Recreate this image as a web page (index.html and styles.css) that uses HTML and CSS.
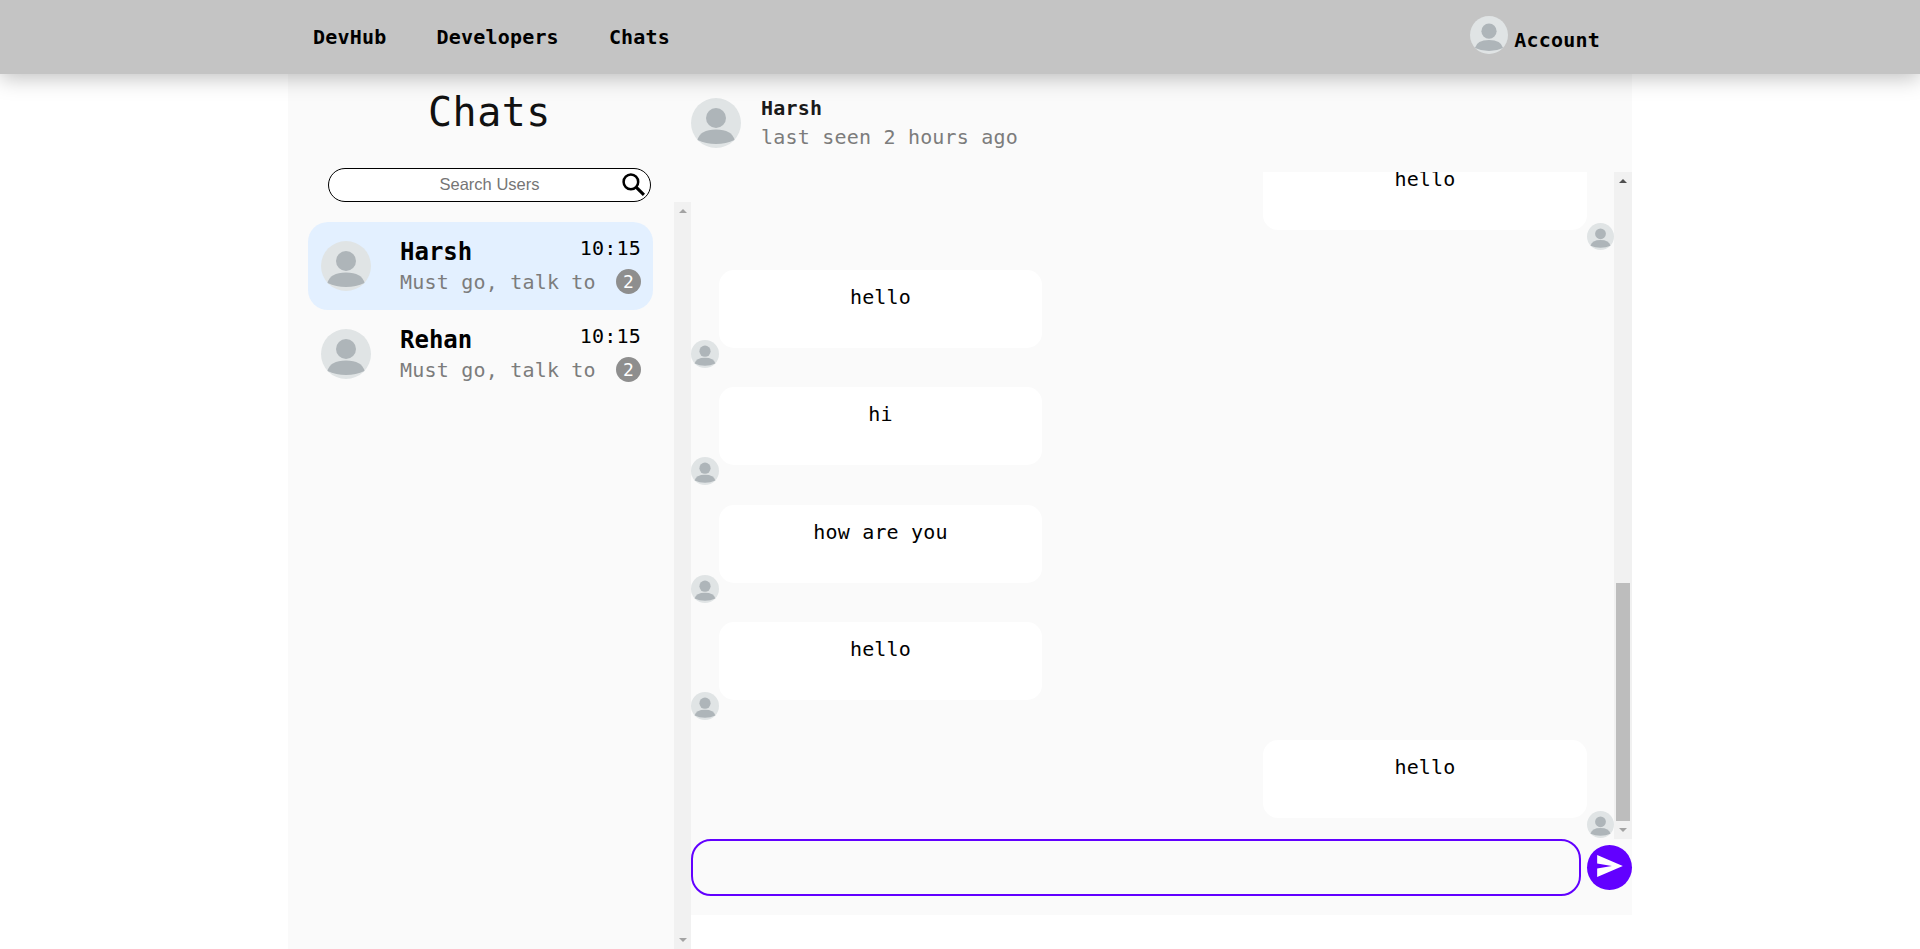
FILE: index.html
```html
<!DOCTYPE html>
<html>
<head>
  <title>DevHub</title>
  <meta charset='utf-8'/>
  <link rel="stylesheet" href="styles.css">
</head>
<body>
<svg class="defs" width="0" height="0">
  <symbol id="avatar" viewBox="0 0 100 100">
    <circle cx="50" cy="50" r="50" fill="#e0e4e5"/>
    <circle cx="50" cy="40" r="20" fill="#aeb5b9"/>
    <path d="M13 84Q18 63 50 63Q82 63 87 84Q70 92 50 92Q30 92 13 84z" fill="#aeb5b9"/>
  </symbol>
</svg>

<nav class="navbar">
  <div class="nav-links">
    <a>DevHub</a>
    <a>Developers</a>
    <a>Chats</a>
  </div>
  <div class="nav-account">
    <svg class="av-nav"><use href="#avatar"/></svg>
    <span>Account</span>
  </div>
</nav>

<div class="wrap">
  <div class="sidebar">
    <h1 class="title">Chats</h1>
    <div class="search">
      <span class="search-text">Search Users</span>
      <svg class="search-icon" viewBox="0 0 24 24">
        <circle cx="9.5" cy="9.5" r="7" fill="none" stroke="#000" stroke-width="2.4"/>
        <path d="M14.5 14.5L22 22" stroke="#000" stroke-width="3"/>
      </svg>
    </div>
    <div class="side-body">
      <div class="user-list">
        <div class="user active">
          <svg class="av-big"><use href="#avatar"/></svg>
          <div class="user-info">
            <div class="user-top"><b>Harsh</b><span>10:15</span></div>
            <div class="user-bottom"><span>Must go, talk to</span><i class="badge">2</i></div>
          </div>
        </div>
        <div class="user">
          <svg class="av-big"><use href="#avatar"/></svg>
          <div class="user-info">
            <div class="user-top"><b>Rehan</b><span>10:15</span></div>
            <div class="user-bottom"><span>Must go, talk to</span><i class="badge">2</i></div>
          </div>
        </div>
      </div>
      <div class="track">
        <span class="arrow up"></span>
        <span class="track-fill"></span>
        <span class="arrow down"></span>
      </div>
    </div>
  </div>

  <div class="chat">
    <div class="chat-head">
      <svg class="av-big"><use href="#avatar"/></svg>
      <div class="chat-who">
        <b>Harsh</b>
        <span>last seen 2 hours ago</span>
      </div>
    </div>
    <div class="chat-body">
      <div class="messages">
        <div class="msg mine"><div class="bubble">hello</div><svg class="av-small"><use href="#avatar"/></svg></div>
        <div class="msg"><svg class="av-small"><use href="#avatar"/></svg><div class="bubble">hello</div></div>
        <div class="msg"><svg class="av-small"><use href="#avatar"/></svg><div class="bubble">hi</div></div>
        <div class="msg"><svg class="av-small"><use href="#avatar"/></svg><div class="bubble">how are you</div></div>
        <div class="msg"><svg class="av-small"><use href="#avatar"/></svg><div class="bubble">hello</div></div>
        <div class="msg mine"><div class="bubble">hello</div><svg class="av-small"><use href="#avatar"/></svg></div>
      </div>
      <div class="track track-right">
        <span class="arrow up dark"></span>
        <span class="track-fill"></span>
        <span class="thumb"></span>
        <span class="arrow down"></span>
      </div>
    </div>
    <div class="chat-input">
      <div class="input-box"></div>
      <button class="send">
        <svg viewBox="2 3 21 18" width="26" height="22"><path d="M2 21l21-9L2 3v7l12 2-12 2z" fill="#fff"/></svg>
      </button>
    </div>
  </div>
</div>
</body>
</html>
```

FILE: styles.css
```css
body {
  margin: 0;
  height: 949px;
  overflow: hidden;
  background: #fff;
  font-family: "DejaVu Sans Mono", monospace;
  font-size: 20px;
  letter-spacing: .2px;
  color: #000;
}
.defs { display: block; height: 0; }

.navbar {
  position: relative;
  z-index: 2;
  height: 74px;
  background: #c4c4c4;
  box-shadow: 0 4px 20px rgba(0,0,0,.25);
  display: flex;
  justify-content: space-between;
  padding: 0 320px 0 313px;
  font-weight: bold;
}
.nav-links { display: flex; gap: 50px; align-items: center; height: 74px; }
.nav-account { display: flex; align-items: center; gap: 6px; }
.nav-account span { margin-top: 6px; }
.av-nav { width: 38px; height: 38px; margin-bottom: 4px; }
.av-big { width: 50px; height: 50px; flex: none; }
.av-small { width: 28px; height: 28px; flex: none; margin-top: 70px; }

.wrap {
  width: 1344px;
  margin: 0 auto;
  display: flex;
  height: 875px;
}

.sidebar {
  width: 403px;
  background: #fafafa;
  display: flex;
  flex-direction: column;
}
.title {
  margin: 0;
  height: 94px;
  line-height: 76px;
  text-align: center;
  font-size: 40px;
  font-weight: normal;
  color: #111;
  letter-spacing: .5px;
}
.search {
  width: 323px;
  height: 34px;
  margin-left: 40px;
  box-sizing: border-box;
  border: 1px solid #000;
  border-radius: 17px;
  background: #fff;
  display: flex;
  align-items: center;
  justify-content: center;
  position: relative;
}
.search-text {
  font-family: "Liberation Sans", sans-serif;
  font-size: 16.5px;
  letter-spacing: 0;
  color: #757575;
  margin-top: -2px;
}
.search-icon {
  position: absolute;
  right: 4px;
  top: 3px;
  width: 25px;
  height: 25px;
}
.side-body { flex: 1; display: flex; }
.user-list { width: 386px; padding: 20px 0 0 20px; box-sizing: border-box; }
.user {
  width: 345px;
  height: 88px;
  box-sizing: border-box;
  padding: 19px 12px 0 13px;
  border-radius: 20px;
  display: flex;
  gap: 29px;
}
.user.active { background: #e3f0ff; }
.user-info { flex: 1; }
.user-top {
  display: flex;
  justify-content: space-between;
  align-items: flex-start;
  height: 30px;
  margin-top: -6px;
}
.user-top b { font-size: 24px; line-height: 34px; letter-spacing: 0; }
.user-top span { line-height: 26px; }
.user-bottom {
  display: flex;
  justify-content: space-between;
  align-items: center;
  color: #7c7c7c;
  margin-top: 3px;
}
.user-bottom span { margin-top: 2px; }
.badge {
  width: 25px;
  height: 25px;
  border-radius: 50%;
  background: #8e8e8e;
  color: #fff;
  font-style: normal;
  font-size: 18px;
  text-align: center;
  line-height: 25px;
  letter-spacing: 0;
}

.track {
  width: 17px;
  background: #f1f1f1;
  display: flex;
  flex-direction: column;
  align-items: center;
  justify-content: space-between;
  padding: 7px 0;
  box-sizing: border-box;
}
.track-right { width: 18px; height: 667px; }
.track-fill { flex: 1; }
.arrow { width: 0; height: 0; border-left: 4px solid transparent; border-right: 4px solid transparent; }
.arrow.up { border-bottom: 4px solid #a3a3a3; }
.arrow.up.dark { border-bottom-color: #505050; }
.arrow.down { border-top: 4px solid #a3a3a3; }
.thumb { width: 14px; height: 238px; background: #bdbdbd; margin-bottom: 7px; }

.chat {
  width: 941px;
  height: 841px;
  background: #fafafa;
  display: flex;
  flex-direction: column;
}
.chat-head {
  height: 98px;
  box-sizing: border-box;
  padding-top: 24px;
  display: flex;
  gap: 20px;
}
.chat-who { display: flex; flex-direction: column; }
.chat-who b { line-height: 26px; margin-top: -3px; color: #1a1a1a; }
.chat-who span { color: #7c7c7c; line-height: 32px; }
.chat-body { display: flex; height: 667px; }
.messages {
  width: 923px;
  height: 667px;
  overflow: hidden;
  display: flex;
  flex-direction: column;
  justify-content: flex-end;
  gap: 19.6px;
  padding-bottom: 1px;
  box-sizing: border-box;
}
.msg { display: flex; flex: none; height: 98px; }
.msg.mine { justify-content: flex-end; }
.msg.mine .bubble { width: 324px; }
.msg.mine .av-small { width: 27px; height: 27px; margin-top: 71px; }
.bubble {
  width: 323px;
  height: 78px;
  box-sizing: border-box;
  background: #fff;
  border-radius: 15px;
  text-align: center;
  padding-top: 14px;
  line-height: 26px;
}
.chat-input {
  display: flex;
  gap: 6px;
}
.input-box {
  width: 890px;
  height: 57px;
  box-sizing: border-box;
  border: 2px solid #6200ff;
  border-radius: 20px;
}
.send {
  width: 45px;
  height: 45px;
  margin-top: 6px;
  border: 0;
  padding: 0 0 4px;
  border-radius: 50%;
  background: #6200ff;
  display: flex;
  align-items: center;
  justify-content: center;
}
```
